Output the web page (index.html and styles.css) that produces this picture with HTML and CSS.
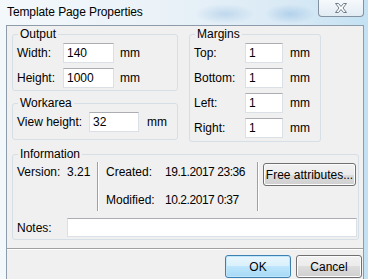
FILE: index.html
```html
<!DOCTYPE html>
<html>
	<head>
		<meta http-equiv="Content-Type" content="text/html;charset=UTF-8" />
		<title>Template Page Properties</title>
		<link rel="stylesheet" href="styles.css">
	</head>
	<body>

		<div class="window">

			<div class="titlebar">
				<span class="title">Template Page Properties</span>
				<div class="close">
					<svg width="12" height="10" viewBox="0 0 12 10">
						<path d="M0.5 0.5h3l2.5 3 2.5-3h3L8 5l3.5 4.5h-3L6 6.5l-2.5 3h-3L4 5z" fill="#fff" stroke="#6f7c8a" stroke-width="1" stroke-linejoin="round"/>
					</svg>
				</div>
			</div>

			<div class="client">
				<div class="content">

					<div class="top">
						<div class="left-col">
							<fieldset class="group output">
								<legend>Output</legend>
								<div class="row"><label>Width:</label><input class="field" value="140"><span class="unit">mm</span></div>
								<div class="row"><label>Height:</label><input class="field" value="1000"><span class="unit">mm</span></div>
							</fieldset>
							<fieldset class="group workarea">
								<legend>Workarea</legend>
								<div class="row"><label>View height:</label><input class="field" value="32"><span class="unit">mm</span></div>
							</fieldset>
						</div>

						<fieldset class="group margins">
							<legend>Margins</legend>
							<div class="row"><label>Top:</label><input class="field" value="1"><span class="unit">mm</span></div>
							<div class="row"><label>Bottom:</label><input class="field" value="1"><span class="unit">mm</span></div>
							<div class="row"><label>Left:</label><input class="field" value="1"><span class="unit">mm</span></div>
							<div class="row"><label>Right:</label><input class="field" value="1"><span class="unit">mm</span></div>
						</fieldset>
					</div>

					<fieldset class="group info">
						<legend>Information</legend>
						<div class="info-top">
							<div class="version"><span class="key">Version:</span><span>3.21</span></div>
							<div class="vsep"></div>
							<div class="dates">
								<div class="line"><span class="key">Created:</span><span class="stamp">19.1.2017 23:36</span></div>
								<div class="line"><span class="key">Modified:</span><span class="stamp">10.2.2017 0:37</span></div>
							</div>
							<div class="vsep"></div>
							<button class="btn attrs">Free attributes...</button>
						</div>
						<div class="notes"><label>Notes:</label><input class="field"></div>
					</fieldset>

				</div>

				<div class="divider"></div>

				<div class="buttons">
					<button class="btn default">OK</button>
					<button class="btn">Cancel</button>
				</div>
			</div>

		</div>

	</body>
</html>
```

FILE: styles.css
```css
body {
	margin: 0;
	font: 12px "Liberation Sans", Arial, sans-serif;
	color: #000;
}

.window {
	width: 368px;
	height: 279px;
	display: flex;
	flex-direction: column;
	overflow: hidden;
	background:
		radial-gradient(ellipse 30px 10px at 225px 14px, rgba(150, 190, 225, 0.45), transparent),
		radial-gradient(ellipse 25px 10px at 290px 14px, rgba(140, 185, 225, 0.5), transparent),
		linear-gradient(90deg, #f3f8fb 0%, #eaf2f8 45%, #d8e9f5 80%, #c3e1f3 100%);
}

.titlebar {
	height: 25px;
	flex-shrink: 0;
	display: flex;
	justify-content: space-between;
	align-items: flex-start;
}

.title {
	padding: 5px 0 0 7px;
	line-height: 15px;
	letter-spacing: -0.1px;
}

.close {
	width: 44px;
	height: 16px;
	margin-right: 4px;
	border: 1px solid #8391a1;
	border-top: none;
	border-radius: 0 0 4px 4px;
	background: linear-gradient(#f6f9fc, #e2ebf3);
	display: flex;
	align-items: center;
	justify-content: center;
}

.client {
	flex: 1;
	margin: 0 4px 0 6px;
	border: 1px solid #8e9bab;
	border-bottom: none;
	background: #f0f0f0;
}

.content {
	padding: 1px 0 0 5px;
}

.top {
	display: flex;
	gap: 11px;
}

.left-col {
	width: 166px;
	display: flex;
	flex-direction: column;
	gap: 5px;
}

.group {
	margin: 0;
	min-width: 0;
	border: 1px solid #d5dfe5;
	border-radius: 3px;
	padding: 2px 0 2px 4px;
	display: flex;
	flex-direction: column;
	gap: 5px;
}

.group legend {
	padding: 0 2px;
	margin-left: 1px;
	line-height: 14px;
}

.row {
	display: flex;
	align-items: center;
	height: 20px;
}

.field {
	box-sizing: border-box;
	height: 20px;
	margin: 0;
	padding: 0 0 0 3px;
	border: 1px solid #dbdfe6;
	border-top-color: #abadb3;
	background: #fff;
	font: inherit;
	color: #000;
	outline: none;
}

.unit {
	margin-left: 6px;
}

.output label {
	width: 46px;
}

.output .field {
	width: 51px;
}

.workarea {
	padding-bottom: 7px;
}

.workarea label {
	width: 72px;
}

.workarea .field {
	width: 50px;
}

.workarea .unit {
	margin-left: 8px;
}

.margins {
	width: 132px;
	box-sizing: border-box;
	padding-bottom: 3px;
}

.margins label {
	width: 51px;
}

.margins .field {
	width: 38px;
}

.margins .unit {
	margin-left: 7px;
}

.info {
	width: 347px;
	box-sizing: border-box;
	margin-top: 5px;
	padding: 1px 1px 2px 4px;
	gap: 7px;
}

.info-top {
	display: flex;
	height: 49px;
}

.key {
	display: inline-block;
}

.version {
	width: 80px;
	padding-top: 3px;
	line-height: 14px;
}

.version .key {
	width: 50px;
}

.vsep {
	width: 1px;
	background: #a0a0a0;
	border-right: 1px solid #fff;
}

.dates {
	width: 151px;
	padding: 3px 0 0 7px;
	display: flex;
	flex-direction: column;
	gap: 14px;
	line-height: 14px;
}

.dates .key {
	width: 59px;
}

.stamp {
	letter-spacing: -0.45px;
}

.notes {
	display: flex;
	align-items: center;
	height: 19px;
}

.notes label {
	width: 50px;
}

.notes .field {
	width: 290px;
	height: 19px;
}

.btn {
	box-sizing: border-box;
	height: 23px;
	margin: 0;
	padding: 0;
	border: 1px solid #707070;
	border-radius: 3px;
	box-shadow: inset 0 0 0 1px #fcfcfc;
	background: linear-gradient(#f2f2f2 0%, #ebebeb 50%, #dddddd 50%, #cfcfcf 100%);
	font: inherit;
	color: #000;
}

.attrs {
	width: 93px;
	margin: 1px 0 0 4px;
}

.divider {
	margin-top: 8px;
	border-top: 1px solid #a0a0a0;
	border-bottom: 1px solid #fff;
}

.buttons {
	display: flex;
	justify-content: flex-end;
	gap: 5px;
	padding: 5px 1px 0 0;
}

.buttons .btn {
	width: 66px;
}

.btn.default {
	border-color: #3c7fb1;
	box-shadow: inset 0 0 0 1px #c0e6fb;
	background: linear-gradient(#e9f6fd 0%, #d9f0fc 50%, #bee6fd 50%, #a7d9f5 100%);
}
```
